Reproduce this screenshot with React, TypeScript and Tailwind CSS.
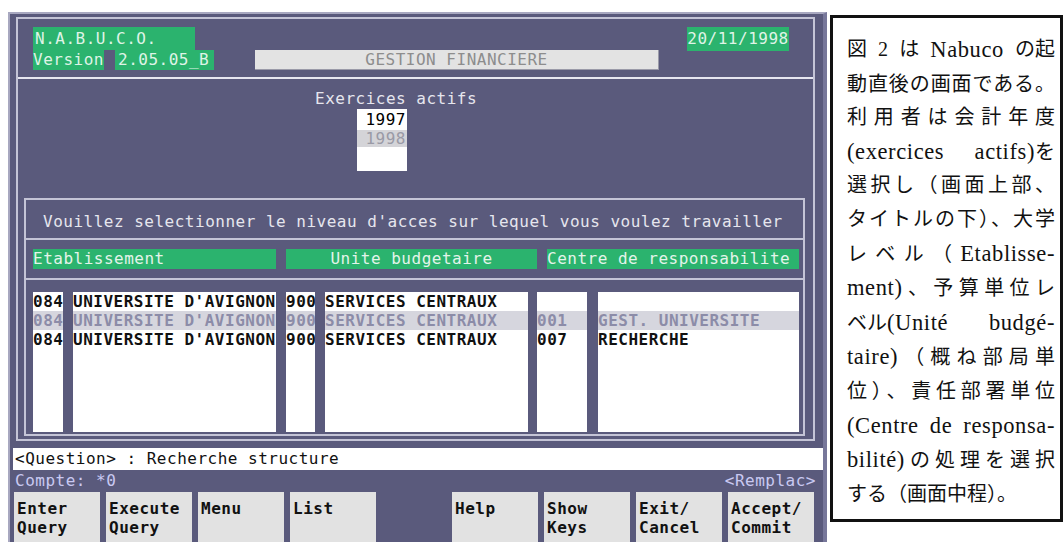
const mono = "font-['DejaVu_Sans_Mono',monospace] text-[16px] tracking-[0.5px]";

type Row = {
  code: string;
  name: string;
  unit: string;
  unitName: string;
  centre: string;
  centreName: string;
  selected?: boolean;
};

const rows: Row[] = [
  { code: "084", name: "UNIVERSITE D'AVIGNON", unit: "900", unitName: "SERVICES CENTRAUX", centre: "", centreName: "" },
  {
    code: "084",
    name: "UNIVERSITE D'AVIGNON",
    unit: "900",
    unitName: "SERVICES CENTRAUX",
    centre: "001",
    centreName: "GEST. UNIVERSITE",
    selected: true,
  },
  { code: "084", name: "UNIVERSITE D'AVIGNON", unit: "900", unitName: "SERVICES CENTRAUX", centre: "007", centreName: "RECHERCHE" },
];

const columns: { key: keyof Row; width: string; gap: string }[] = [
  { key: "code", width: "w-[30px]", gap: "" },
  { key: "name", width: "w-[203px]", gap: "ml-[10px]" },
  { key: "unit", width: "w-[29px]", gap: "ml-[10px]" },
  { key: "unitName", width: "w-[203px]", gap: "ml-[10px]" },
  { key: "centre", width: "w-[50px]", gap: "ml-[9px]" },
  { key: "centreName", width: "w-[201px]", gap: "ml-[11px]" },
];

const keys = [
  ["Enter", "Query"],
  ["Execute", "Query"],
  ["Menu", ""],
  ["List", ""],
  ["Help", ""],
  ["Show", "Keys"],
  ["Exit/", "Cancel"],
  ["Accept/", "Commit"],
];

const L = ({ children }: { children: React.ReactNode }) => (
  <span className="text-[22.5px] tracking-[0.6px]">{children}</span>
);

// Lignes "chars" : justifiées en étirant entre les caractères ;
// lignes en tableau : seuls les blancs entre les morceaux s'étirent.
type Line = { chars: React.ReactNode } | { words: React.ReactNode[] } | { last: React.ReactNode };

const note: Line[] = [
  { words: ["図", "2", "は", <L>Nabuco</L>, "の起"] },
  { chars: <>動直後の画面である。</> },
  { chars: <>利用者は会計年度</> },
  { words: [<L>(exercices</L>, <><L>actifs)</L>を</>] },
  { chars: <>選択し（画面上部、</> },
  { chars: <>タイトルの下）、大学</> },
  { chars: <>レベル（<L>Etablisse-</L></> },
  { chars: <><L>ment)</L>、予算単位レ</> },
  { words: [<>ベル<L>(Unité</L></>, <L>budgé-</L>] },
  { chars: <><L>taire)</L>（概ね部局単</> },
  { chars: <>位）、責任部署単位</> },
  { words: [<L>(Centre</L>, <L>de</L>, <L>responsa-</L>] },
  { chars: <><L>bilité)</L>の処理を選択</> },
  { last: <>する（画面中程）。</> },
];

function NoteLine({ line }: { line: Line }) {
  if ("words" in line) {
    return (
      <div className="flex w-[208px] justify-between whitespace-nowrap">
        {line.words.map((w, i) => (
          <span key={i}>{w}</span>
        ))}
      </div>
    );
  }
  if ("last" in line) return <div className="w-[208px]">{line.last}</div>;
  return <div className="w-[208px] text-justify [text-align-last:justify]">{line.chars}</div>;
}

function Header() {
  return (
    <div className="flex h-[60px] border-b-2 border-[#e6e6f0] pl-[15px] pt-[8px]">
      <div className="w-[181px] text-[#dff3e6]">
        <div className="flex h-[23px] w-[162px] items-center bg-[#2bb36e] pl-[2px] leading-[20px]">N.A.B.U.C.O.</div>
        <div className="flex h-[20px]">
          <div className="flex w-[71px] items-center bg-[#2bb36e] leading-[20px]">Version</div>
          <div className="ml-[11px] flex w-[99px] items-center bg-[#2bb36e] pl-[3px] leading-[20px]">2.05.05_B</div>
        </div>
      </div>
      <div className="ml-[41px] mt-[23px] flex h-[20px] w-[404px] items-center justify-center border-b border-r border-[#9a9aa8] bg-[#e3e3e3] leading-[20px] text-[#8d8d8d]">
        GESTION FINANCIERE
      </div>
      <div className="ml-[28px] flex h-[24px] w-[102px] items-center justify-center bg-[#2bb36e] leading-[20px] text-[#dff3e6]">
        20/11/1998
      </div>
    </div>
  );
}

function Exercices() {
  return (
    <div className="flex flex-col">
      <div className="ml-[297px] mt-[10px] h-[20px] leading-[20px] text-[#e6e6ee]">Exercices actifs</div>
      <div className="ml-[339px] flex w-[50px] flex-col bg-white">
        <div className="h-[21px] pr-[1px] text-right leading-[21px] text-black">1997</div>
        <div className="h-[17px] bg-[#d4d4d8] pr-[1px] text-right leading-[17px] text-[#9a9aa6]">1998</div>
        <div className="h-[24px]" />
      </div>
    </div>
  );
}

function Selection() {
  return (
    <div className="ml-[6px] mt-[27px] w-[781px] border-2 border-[#c4c4d6]">
      <div className="flex h-[38px] items-center pl-[17px] pt-[6px] text-[#e6e6ee]">
        Vouillez selectionner le niveau d'acces sur lequel vous voulez travailler
      </div>
      <div className="flex h-[42px] gap-[10px] border-y-2 border-[#c4c4d6] pl-[7px] pt-[9px] text-[#e3f4ea]">
        <div className="h-[20px] w-[243px] bg-[#2bb36e] leading-[20px]">Etablissement</div>
        <div className="h-[20px] w-[251px] bg-[#2bb36e] text-center leading-[20px]">Unite budgetaire</div>
        <div className="h-[20px] w-[252px] bg-[#2bb36e] leading-[20px]">Centre de responsabilite</div>
      </div>
      <div className="flex pb-[2px] pl-[7px] pt-[12px]">
        {columns.map((col) => (
          <div key={col.key} className={`${col.width} ${col.gap} h-[140px] bg-white`}>
            {rows.map((row, i) => (
              <div
                key={i}
                className={`h-[19px] overflow-hidden whitespace-nowrap font-bold leading-[19px] ${
                  row.selected ? "bg-[#d6d6de] text-[#8c8ca8]" : "text-[#111]"
                }`}
              >
                {row[col.key] as string}
              </div>
            ))}
          </div>
        ))}
      </div>
    </div>
  );
}

function Footer() {
  return (
    <div className="flex flex-col">
      <div className="ml-[3px] mt-[7px] flex h-[22px] items-center bg-white pl-[2px] text-[#111]">
        &lt;Question&gt; : Recherche structure
      </div>
      <div className="ml-[3px] flex h-[22px] w-[803px] items-center justify-between pl-[2px] text-[#c9c9f2]">
        <span>Compte: *0</span>
        <span>&lt;Remplac&gt;</span>
      </div>
      <div className="ml-[4px] flex gap-[6px]">
        {keys.map(([a, b], i) => (
          <div
            key={i}
            className={`h-[60px] w-[86px] bg-[#e2e2e2] pl-[3px] pt-[7px] font-bold leading-[19px] text-[#111] ${
              i === 4 ? "ml-[70px]" : ""
            }`}
          >
            <div>{a}</div>
            <div>{b}</div>
          </div>
        ))}
      </div>
    </div>
  );
}

export default function App() {
  return (
    <div className="flex h-[542px] w-[1063px] overflow-hidden bg-white">
      <div
        className={`${mono} ml-[8px] mt-[12px] flex h-[540px] w-[819px] shrink-0 flex-col border-l-2 border-r-4 border-t-2 border-l-[#a8a8c0] border-r-[#77779a] border-t-[#a8a8c0] bg-[#5a5a7c] pt-[3px]`}
      >
        <div className="ml-[6px] h-[424px] w-[799px] border-2 border-[#c4c4d6]">
          <Header />
          <Exercices />
          <Selection />
        </div>
        <Footer />
      </div>

      <div className="ml-[3px] mt-[15px] h-[507px] w-[233px] shrink-0 border-[3px] border-[#111] pl-[14px] pt-[15px] font-['Liberation_Serif','Noto_Sans_CJK_JP',serif] text-[20px] leading-[33.6px] text-[#111]">
        {note.map((line, i) => (
          <NoteLine key={i} line={line} />
        ))}
      </div>
    </div>
  );
}
